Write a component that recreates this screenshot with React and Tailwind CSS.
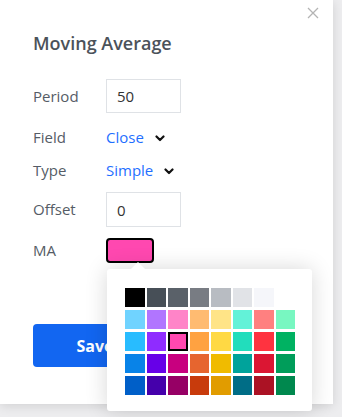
import React, { useState } from 'react';

const SWATCHES = [
  ['#000000', '#474f57', '#5a6169', '#787c83', '#b8bcc2', '#e1e3e7', '#f5f6fa', null],
  ['#70d3ff', '#b175ff', '#ff84c8', '#ffbb71', '#ffe487', '#63f2d8', '#ff8080', '#78f7c1'],
  ['#28bcff', '#8f2cff', '#ff48b0', '#ffa241', '#ffd944', '#22ddbc', '#ff3340', '#00b262'],
  ['#0883e8', '#6700e8', '#c8007f', '#e6652f', '#f0bb00', '#00a39b', '#db1633', '#009d5a'],
  ['#005fc8', '#4500ab', '#960065', '#c83b0c', '#e19c00', '#006d86', '#ab1224', '#00884e'],
];

function Chevron() {
  return (
    <svg width="10" height="7" viewBox="0 0 10 7" className="ml-[11px] mt-[3px]">
      <path d="M1.5 1.5 L5 5 L8.5 1.5" fill="none" stroke="#111" strokeWidth="2.2" strokeLinecap="round" strokeLinejoin="round" />
    </svg>
  );
}

function Label({ children }) {
  return <div className="w-[73px] shrink-0 text-[15px] text-[#555c66]">{children}</div>;
}

export default function App() {
  const [period, setPeriod] = useState('50');
  const [offset, setOffset] = useState('0');
  const [color, setColor] = useState('#ff48b0');

  return (
    <div className="w-[342px] h-[417px] overflow-hidden bg-[#ededef] relative" style={{ fontFamily: '"Open Sans", sans-serif' }}>
      <div className="relative w-[333px] h-[404px] bg-white shadow-[0_2px_10px_rgba(0,0,0,0.12)] pl-[33px] pt-[31px]">
        <button className="absolute right-[14px] top-[7px] w-[12px] h-[12px]">
          <svg width="12" height="12" viewBox="0 0 12 12">
            <path d="M1 1 L11 11 M11 1 L1 11" stroke="#b4b4b4" strokeWidth="1.3" />
          </svg>
        </button>

        <h1 className="text-[18px] leading-[24px] font-semibold text-[#4b525a]">Moving Average</h1>

        <div className="mt-[24px] flex items-center h-[34px]">
          <Label>Period</Label>
          <input
            value={period}
            onChange={(e) => setPeriod(e.target.value)}
            className="w-[75px] h-[34px] border border-[#dfe2e6] px-[10px] text-[15px] text-[#333] outline-none"
          />
        </div>

        <div className="mt-[12px] flex items-center h-[24px]">
          <Label>Field</Label>
          <span className="text-[15px] text-[#1f6fff]">Close</span>
          <Chevron />
        </div>

        <div className="mt-[9px] flex items-center h-[24px]">
          <Label>Type</Label>
          <span className="text-[15px] text-[#1f6fff]">Simple</span>
          <Chevron />
        </div>

        <div className="mt-[10px] flex items-center h-[35px]">
          <Label>Offset</Label>
          <input
            value={offset}
            onChange={(e) => setOffset(e.target.value)}
            className="w-[75px] h-[35px] border border-[#dfe2e6] px-[10px] text-[15px] text-[#333] outline-none"
          />
        </div>

        <div className="mt-[10px] flex items-center h-[26px]">
          <Label>MA</Label>
          <div className="w-[48px] h-[25px] rounded-[4px] border-2 border-black" style={{ backgroundColor: color }} />
        </div>

        <button className="mt-[61px] w-[124px] h-[43px] rounded-[4px] bg-[#1266f1] text-white text-[16px] font-bold">
          Save
        </button>

        <div className="absolute left-[107px] top-[269px] w-[205px] h-[142px] bg-white rounded-[3px] shadow-[0_0_22px_rgba(0,0,0,0.16)] pl-[18px] pt-[19px]">
          <div className="absolute left-[23px] top-[-7px] w-0 h-0 border-l-[8px] border-r-[8px] border-b-[8px] border-l-transparent border-r-transparent border-b-white" />
          <div className="grid grid-cols-[repeat(8,19.5px)] gap-x-[2px] gap-y-[3px]">
            {SWATCHES.flat().map((c, i) =>
              c ? (
                <button
                  key={i}
                  onClick={() => setColor(c)}
                  className={`h-[19px] ${c === color ? 'border-2 border-black' : ''}`}
                  style={{ backgroundColor: c }}
                />
              ) : (
                <div key={i} />
              )
            )}
          </div>
        </div>
      </div>
    </div>
  );
}
